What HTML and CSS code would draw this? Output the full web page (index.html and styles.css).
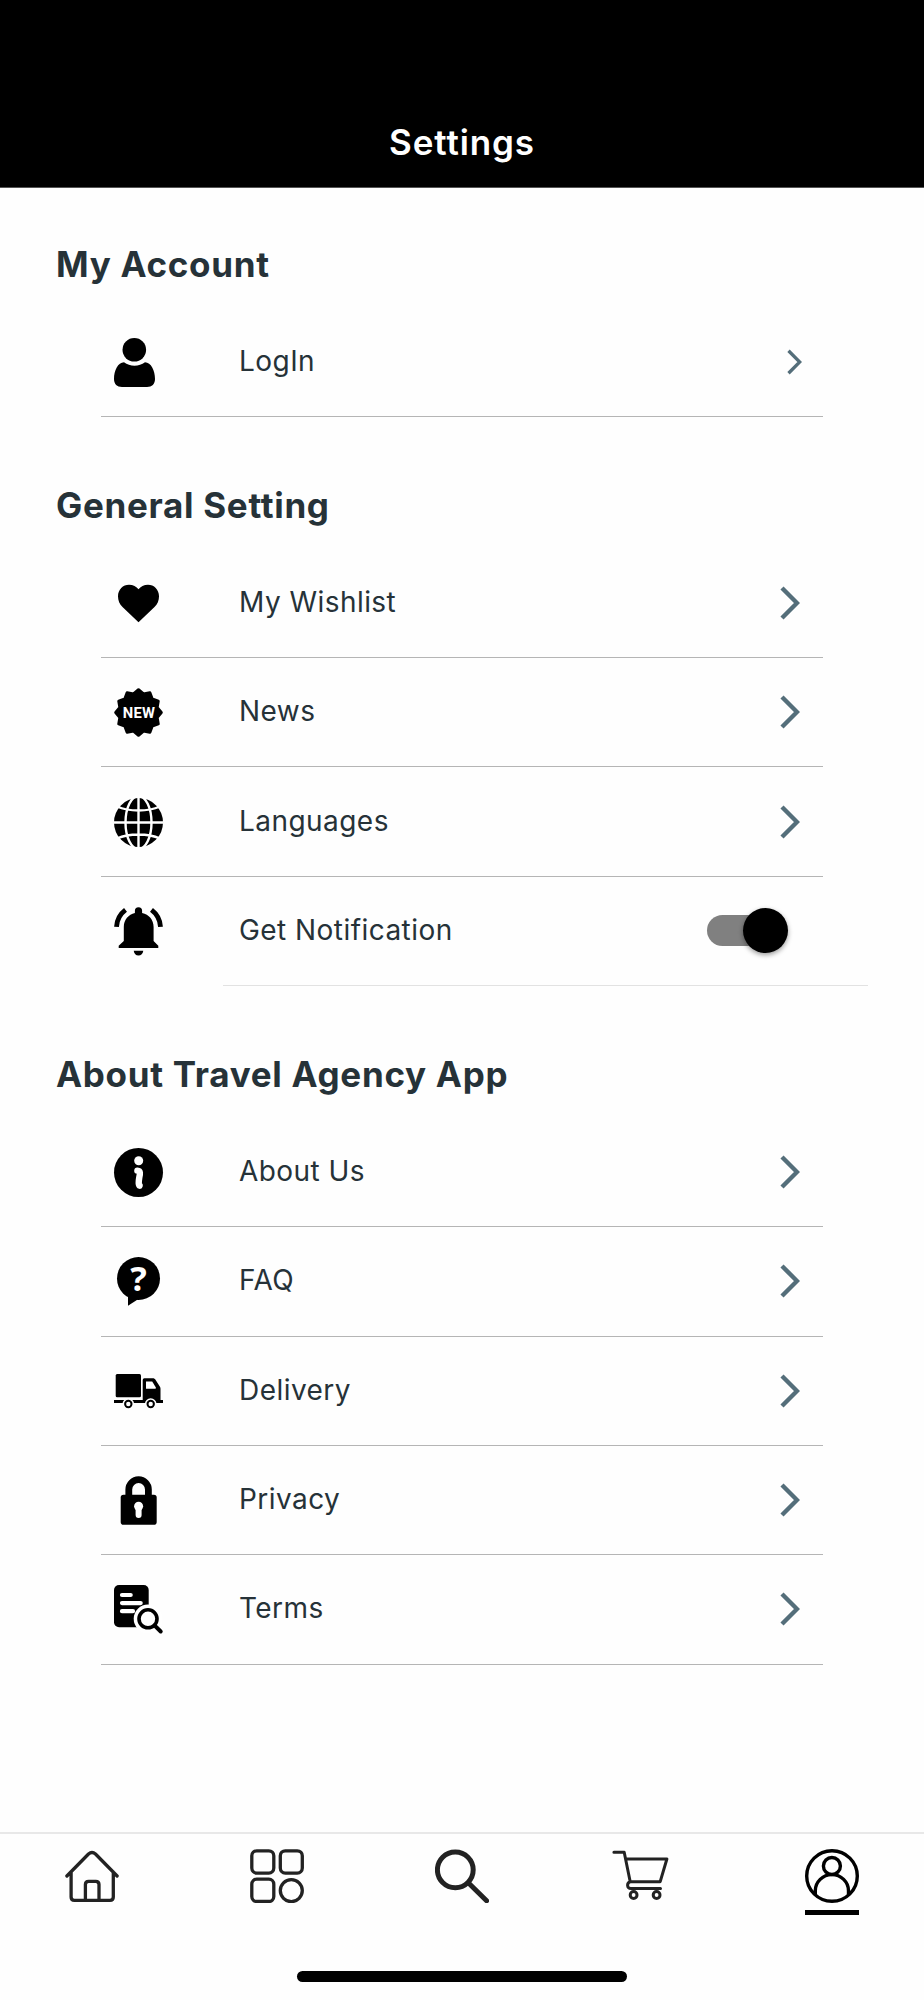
FILE: index.html
```
<!DOCTYPE html>
<html lang="en">
<head>
    <meta charset="UTF-8">
    <meta name="viewport" content="width=device-width, initial-scale=1.0">
    <title>Settings</title>
    <link rel="stylesheet" href="styles.css">
</head>
<body>
    <header class="header">
        <h1>Settings</h1>
    </header>

    <main class="content">
        <section class="section">
            <h2>My Account</h2>
            <div class="row">
                <svg class="icon" viewBox="0 0 49 49">
                    <circle cx="20.3" cy="11.8" r="11.8"/>
                    <path d="M10 24.2C4 24.6 0 32 0 41c0 5 3 8 8 8h25c5 0 8-3 8-8 0-9-4-16.4-10-16.8-6 4.6-15 4.6-21 0z"/>
                </svg>
                <span class="label">LogIn</span>
                <svg class="chevron small" viewBox="0 0 20 34"><path d="M2 2l15 15L2 32"/></svg>
            </div>
        </section>

        <section class="section">
            <h2>General Setting</h2>
            <div class="row">
                <svg class="icon" viewBox="0 0 49 49">
                    <path d="M24.5 43.3L8.5 28C5.5 25 4 21.5 4 17.2 4 10.5 9 5.7 15 5.7c4 0 7.5 1.8 9.5 4.6 2-2.8 5.5-4.6 9.5-4.6 6 0 11 4.8 11 11.5 0 4.3-1.5 7.8-4.5 10.8z"/>
                </svg>
                <span class="label">My Wishlist</span>
                <svg class="chevron" viewBox="0 0 20 34"><path d="M2 2l15 15L2 32"/></svg>
            </div>
            <div class="row">
                <svg class="icon" viewBox="0 0 49 49">
                    <polygon stroke="#000" stroke-width="3" stroke-linejoin="round" points="24.5,1.7 29.5,5.86 35.9,4.75 38.15,10.85 44.25,13.1 43.14,19.5 47.3,24.5 43.14,29.5 44.25,35.9 38.15,38.15 35.9,44.25 29.5,43.14 24.5,47.3 19.5,43.14 13.1,44.25 10.85,38.15 4.75,35.9 5.86,29.5 1.7,24.5 5.86,19.5 4.75,13.1 10.85,10.85 13.1,4.75 19.5,5.86"/>
                    <text class="new-text" x="25" y="29.6">NEW</text>
                </svg>
                <span class="label">News</span>
                <svg class="chevron" viewBox="0 0 20 34"><path d="M2 2l15 15L2 32"/></svg>
            </div>
            <div class="row">
                <svg class="icon" viewBox="0 0 49 49">
                    <circle cx="24.5" cy="24.5" r="24.5"/>
                    <g fill="none" stroke="#fff" stroke-width="2.4">
                        <path d="M24.5 0v49M0 24.5h49M3 8.5c12 5.3 31 5.3 43 0M3 40.5c12-5.3 31-5.3 43 0"/>
                        <ellipse cx="24.5" cy="24.5" rx="13" ry="26.5"/>
                    </g>
                </svg>
                <span class="label">Languages</span>
                <svg class="chevron" viewBox="0 0 20 34"><path d="M2 2l15 15L2 32"/></svg>
            </div>
            <div class="row last-switch">
                <svg class="icon" viewBox="0 0 49 49">
                    <path d="M24.5.2a3.6 3.6 0 0 1 3.6 3.6v2.3C35 7.5 39.6 13 39.6 20v14l4.7 4.8V41H4.7v-2.2L9.8 34V20c0-7 4.7-12.5 11.1-13.9V3.8A3.6 3.6 0 0 1 24.5.2zM19.7 43.7h9.6c-.4 3-2.2 4.8-4.8 4.8s-4.4-1.8-4.8-4.8z"/>
                    <path d="M2.5 19.8C2.8 13 6 7 11.5 2.8M46.5 19.8C46.2 13 43 7 37.5 2.8" fill="none" stroke="#000" stroke-width="4.8"/>
                </svg>
                <span class="label">Get Notification</span>
                <div class="switch"><div class="thumb"></div></div>
            </div>
        </section>

        <section class="section">
            <h2>About Travel Agency App</h2>
            <div class="row">
                <svg class="icon" viewBox="0 0 49 49">
                    <circle cx="24.5" cy="24.5" r="24.5"/>
                    <circle cx="24.7" cy="12.7" r="4.5" fill="#fff"/>
                    <path d="M23.4 22.6c3.4.2 2.6 3.4 1.8 7.4-.7 3.8-.7 7.5.4 7.7" fill="none" stroke="#fff" stroke-width="6.4" stroke-linecap="round"/>
                </svg>
                <span class="label">About Us</span>
                <svg class="chevron" viewBox="0 0 20 34"><path d="M2 2l15 15L2 32"/></svg>
            </div>
            <div class="row">
                <svg class="icon" viewBox="0 0 49 49">
                    <circle cx="24.5" cy="21.5" r="21.5"/>
                    <path d="M14 36v12.8L26 41z"/>
                    <text class="question" x="24.6" y="34.3">?</text>
                </svg>
                <span class="label">FAQ</span>
                <svg class="chevron" viewBox="0 0 20 34"><path d="M2 2l15 15L2 32"/></svg>
            </div>
            <div class="row">
                <svg class="icon" viewBox="0 0 49 49">
                    <rect x="1.7" y="7" width="25.3" height="23.3" rx="1.5"/>
                    <path d="M0 33h28.7V13q0-1.7 1.7-1.7h8.2c1.5 0 2.4.6 3.2 1.9l4 6.3q.7 1 .7 2.2V33H49v3H0z"/>
                    <path d="M32 14.5h6.2l3.5 5.7v1.5H32z" fill="#fff"/>
                    <g stroke="#fff" stroke-width="1.6">
                        <circle cx="14.3" cy="37" r="5"/>
                        <circle cx="36.7" cy="37" r="5"/>
                    </g>
                    <circle cx="14.3" cy="37" r="2.2" fill="#fff"/>
                    <circle cx="36.7" cy="37" r="2.2" fill="#fff"/>
                </svg>
                <span class="label">Delivery</span>
                <svg class="chevron" viewBox="0 0 20 34"><path d="M2 2l15 15L2 32"/></svg>
            </div>
            <div class="row">
                <svg class="icon" viewBox="0 0 49 49">
                    <rect x="6.7" y="18.7" width="36" height="30" rx="2.8"/>
                    <path d="M14.8 20v-6.5a9.8 9.8 0 0 1 19.6 0V20" fill="none" stroke="#000" stroke-width="6.8"/>
                    <circle cx="24.6" cy="30.3" r="4.5" fill="#fff"/>
                    <path d="M24.6 31v8" stroke="#fff" stroke-width="6" stroke-linecap="round"/>
                </svg>
                <span class="label">Privacy</span>
                <svg class="chevron" viewBox="0 0 20 34"><path d="M2 2l15 15L2 32"/></svg>
            </div>
            <div class="row">
                <svg class="icon" viewBox="0 0 49 49">
                    <rect width="34.7" height="42.3" rx="5"/>
                    <path d="M8 10h8.7M8 18.1h18.7M8 26.2h11" stroke="#fff" stroke-width="4.2" stroke-linecap="round"/>
                    <circle cx="34" cy="33.8" r="14.3" fill="#fff"/>
                    <circle cx="34" cy="33.8" r="9" fill="none" stroke="#000" stroke-width="3.6"/>
                    <path d="M40.5 40.3l6.2 6.2" stroke="#000" stroke-width="4" stroke-linecap="round"/>
                </svg>
                <span class="label">Terms</span>
                <svg class="chevron" viewBox="0 0 20 34"><path d="M2 2l15 15L2 32"/></svg>
            </div>
        </section>
    </main>

    <nav class="tabs">
        <a class="tab">
            <svg width="54" height="54" viewBox="0 0 54 54" stroke-width="3.3">
                <path d="M1.9 27L23.5 5q3.5-3 7 0l21.6 22M6.1 23v25q0 3.3 3.3 3.3H45q3.3 0 3.3-3.3V23M20.4 51V35.5q0-3.2 3.2-3.2h7.2q3.2 0 3.2 3.2V51"/>
            </svg>
        </a>
        <a class="tab">
            <svg width="54" height="54" viewBox="0 0 54 54" stroke-width="3.3">
                <rect x="1.8" y="1.8" width="22" height="22.3" rx="5"/>
                <rect x="30.3" y="1.8" width="22" height="22.3" rx="5"/>
                <rect x="1.8" y="30.2" width="22" height="22.3" rx="5"/>
                <circle cx="41.3" cy="41.6" r="11"/>
            </svg>
        </a>
        <a class="tab">
            <svg width="54" height="54" viewBox="0 0 54 54" stroke-width="5">
                <circle cx="20.3" cy="20.8" r="17.9"/>
                <path d="M33.8 34.3L51.6 51.7"/>
            </svg>
        </a>
        <a class="tab">
            <svg width="70" height="54" viewBox="0 0 70 54" stroke-width="3">
                <path d="M1.9 3.3h10.3l6 29.4h30l6.7-22.7H14M18.2 32.7c-3.6 1-3.6 6.8.8 6.8h29.5"/>
                <circle cx="21.6" cy="46" r="3.4"/>
                <circle cx="44.6" cy="46" r="3.4"/>
            </svg>
        </a>
        <a class="tab active">
            <svg width="54" height="54" viewBox="0 0 54 54" stroke-width="3.4">
                <circle cx="27" cy="27" r="25.3"/>
                <circle cx="26.9" cy="17" r="8.5"/>
                <path d="M10.3 45v-3.2a16.6 16.2 0 0 1 33.2 0V45"/>
            </svg>
        </a>
    </nav>
    <div class="home-bar"></div>
</body>
</html>
```
FILE: styles.css
```
* {
    box-sizing: border-box;
}

body {
    margin: 0;
    height: 2000px;
    display: flex;
    flex-direction: column;
    background-color: #fefefe;
    color: #263238;
    font-family: Inter, "Liberation Sans", sans-serif;
}

.header {
    height: 188px;
    padding-top: 121px;
    background-color: #000;
    border-bottom: 1px solid #555;
    text-align: center;
}

h1 {
    margin: 0;
    color: #fff;
    font-size: 35px;
    line-height: 42px;
    font-weight: 600;
    letter-spacing: 0.9px;
}

.content {
    flex: 1;
    padding: 0 56px;
}

.section {
    padding-top: 67px;
}

.section:first-child {
    padding-top: 55px;
}

h2 {
    margin: 0 0 22.6px;
    font-size: 35px;
    line-height: 42px;
    font-weight: 700;
    letter-spacing: 0.7px;
}

.row {
    display: flex;
    align-items: center;
    height: 109.4px;
    margin: 0 45px;
    padding: 1px 23px 0 13px;
    border-bottom: 1px solid #b5b5b5;
}

/* divider under the switch row is lighter and starts at the label */
.last-switch {
    padding-right: 35px;
    border-bottom-color: transparent;
    position: relative;
}

.last-switch::after {
    content: "";
    position: absolute;
    left: 122px;
    right: -45px;
    bottom: -1px;
    height: 1px;
    background-color: #e2e2e2;
}

.icon {
    width: 49px;
    height: 49px;
    flex: none;
    overflow: visible;
}

.new-text {
    font: bold 14.8px Roboto, sans-serif;
    fill: #fff;
    letter-spacing: 0.2px;
    text-anchor: middle;
}

.question {
    font: bold 34.5px "Noto Sans", sans-serif;
    fill: #fff;
    text-anchor: middle;
}

.label {
    flex: 1;
    margin-left: 76px;
    padding-bottom: 3px;
    font-size: 28px;
    letter-spacing: 0.45px;
}

.chevron {
    width: 20px;
    height: 34px;
    margin-bottom: 1px;
    fill: none;
    stroke: #546e7a;
    stroke-width: 4.4px;
}

.chevron.small {
    width: 15px;
    height: 26px;
    margin-right: -2px;
}

.switch {
    width: 76px;
    height: 31px;
    margin: 0 5px 1px 0;
    border-radius: 16px;
    background-color: #808080;
}

.thumb {
    width: 45px;
    height: 45px;
    margin: -7px 0 0 36px;
    border-radius: 50%;
    background-color: #000;
    box-shadow: 0 2px 5px rgba(0, 0, 0, 0.4);
}

.tabs {
    display: flex;
    height: 139px;
    padding-top: 15px;
    border-top: 2px solid #e8e8e8;
}

.tab {
    flex: 1;
    display: flex;
    flex-direction: column;
    align-items: center;
}

.tab svg {
    fill: none;
    stroke: #222;
    stroke-linecap: round;
    stroke-linejoin: round;
}

.tab.active svg {
    stroke: #000;
}

.tab.active::after {
    content: "";
    width: 54px;
    height: 5px;
    margin-top: 7px;
    background-color: #000;
}

.home-bar {
    width: 330px;
    height: 11px;
    margin: 0 auto 18px;
    border-radius: 6px;
    background-color: #000;
}
```
